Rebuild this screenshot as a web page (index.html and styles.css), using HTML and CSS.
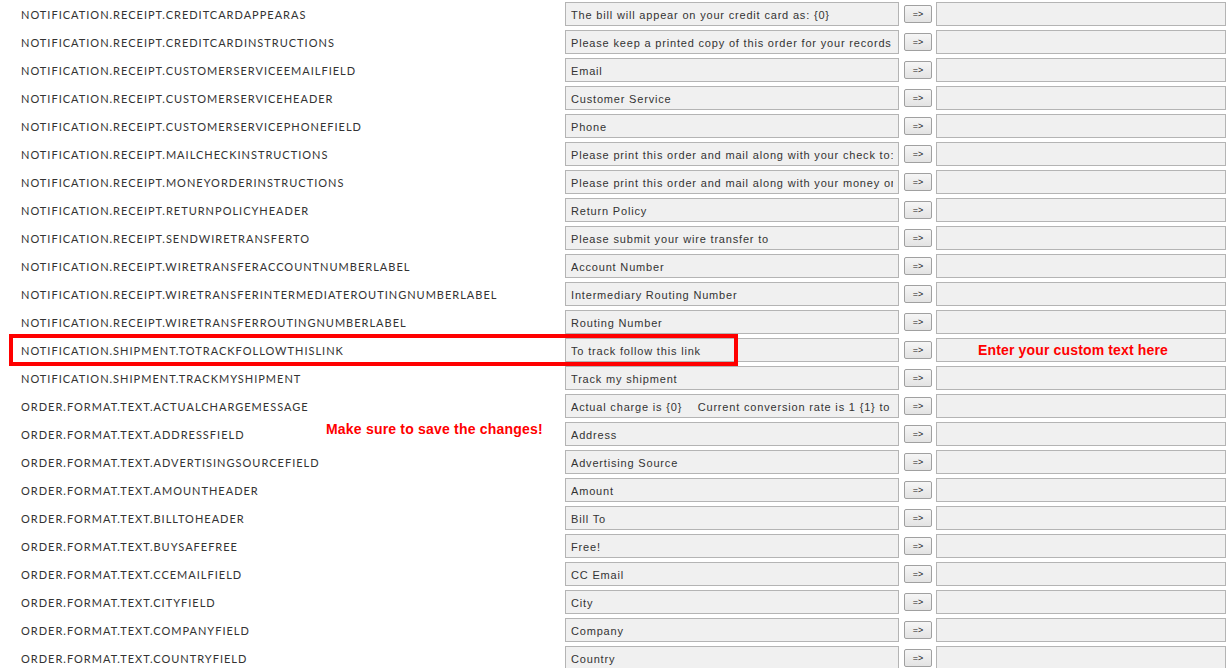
FILE: index.html
```html
<!DOCTYPE html>
<html lang="en">
<head>
    <meta charset="UTF-8">
    <title>Translations</title>
    <link rel="stylesheet" href="styles.css">
</head>
<body>

    <div class="list">
        <div class="row">
            <span class="key">NOTIFICATION.RECEIPT.CREDITCARDAPPEARAS</span>
            <input class="orig" type="text" value="The bill will appear on your credit card as: {0}" readonly>
            <button>=&gt;</button>
            <input class="custom" type="text">
        </div>
        <div class="row">
            <span class="key">NOTIFICATION.RECEIPT.CREDITCARDINSTRUCTIONS</span>
            <input class="orig" type="text" value="Please keep a printed copy of this order for your records" readonly>
            <button>=&gt;</button>
            <input class="custom" type="text">
        </div>
        <div class="row">
            <span class="key">NOTIFICATION.RECEIPT.CUSTOMERSERVICEEMAILFIELD</span>
            <input class="orig" type="text" value="Email" readonly>
            <button>=&gt;</button>
            <input class="custom" type="text">
        </div>
        <div class="row">
            <span class="key">NOTIFICATION.RECEIPT.CUSTOMERSERVICEHEADER</span>
            <input class="orig" type="text" value="Customer Service" readonly>
            <button>=&gt;</button>
            <input class="custom" type="text">
        </div>
        <div class="row">
            <span class="key">NOTIFICATION.RECEIPT.CUSTOMERSERVICEPHONEFIELD</span>
            <input class="orig" type="text" value="Phone" readonly>
            <button>=&gt;</button>
            <input class="custom" type="text">
        </div>
        <div class="row">
            <span class="key">NOTIFICATION.RECEIPT.MAILCHECKINSTRUCTIONS</span>
            <input class="orig" type="text" value="Please print this order and mail along with your check to:" readonly>
            <button>=&gt;</button>
            <input class="custom" type="text">
        </div>
        <div class="row">
            <span class="key">NOTIFICATION.RECEIPT.MONEYORDERINSTRUCTIONS</span>
            <input class="orig" type="text" value="Please print this order and mail along with your money order to:" readonly>
            <button>=&gt;</button>
            <input class="custom" type="text">
        </div>
        <div class="row">
            <span class="key">NOTIFICATION.RECEIPT.RETURNPOLICYHEADER</span>
            <input class="orig" type="text" value="Return Policy" readonly>
            <button>=&gt;</button>
            <input class="custom" type="text">
        </div>
        <div class="row">
            <span class="key">NOTIFICATION.RECEIPT.SENDWIRETRANSFERTO</span>
            <input class="orig" type="text" value="Please submit your wire transfer to" readonly>
            <button>=&gt;</button>
            <input class="custom" type="text">
        </div>
        <div class="row">
            <span class="key">NOTIFICATION.RECEIPT.WIRETRANSFERACCOUNTNUMBERLABEL</span>
            <input class="orig" type="text" value="Account Number" readonly>
            <button>=&gt;</button>
            <input class="custom" type="text">
        </div>
        <div class="row">
            <span class="key">NOTIFICATION.RECEIPT.WIRETRANSFERINTERMEDIATEROUTINGNUMBERLABEL</span>
            <input class="orig" type="text" value="Intermediary Routing Number" readonly>
            <button>=&gt;</button>
            <input class="custom" type="text">
        </div>
        <div class="row">
            <span class="key">NOTIFICATION.RECEIPT.WIRETRANSFERROUTINGNUMBERLABEL</span>
            <input class="orig" type="text" value="Routing Number" readonly>
            <button>=&gt;</button>
            <input class="custom" type="text">
        </div>
        <!-- highlighted row -->
        <div class="row">
            <div class="highlight"></div>
            <span class="key">NOTIFICATION.SHIPMENT.TOTRACKFOLLOWTHISLINK</span>
            <input class="orig" type="text" value="To track follow this link" readonly>
            <button>=&gt;</button>
            <input class="custom" type="text">
            <span class="note note-custom">Enter your custom text here</span>
        </div>
        <div class="row">
            <span class="key">NOTIFICATION.SHIPMENT.TRACKMYSHIPMENT</span>
            <input class="orig" type="text" value="Track my shipment" readonly>
            <button>=&gt;</button>
            <input class="custom" type="text">
        </div>
        <div class="row">
            <span class="key">ORDER.FORMAT.TEXT.ACTUALCHARGEMESSAGE</span>
            <input class="orig" type="text" value="Actual charge is {0}    Current conversion rate is 1 {1} to {2}" readonly>
            <button>=&gt;</button>
            <input class="custom" type="text">
        </div>
        <div class="row">
            <span class="key">ORDER.FORMAT.TEXT.ADDRESSFIELD</span>
            <input class="orig" type="text" value="Address" readonly>
            <button>=&gt;</button>
            <input class="custom" type="text">
            <span class="note note-save">Make sure to save the changes!</span>
        </div>
        <div class="row">
            <span class="key">ORDER.FORMAT.TEXT.ADVERTISINGSOURCEFIELD</span>
            <input class="orig" type="text" value="Advertising Source" readonly>
            <button>=&gt;</button>
            <input class="custom" type="text">
        </div>
        <div class="row">
            <span class="key">ORDER.FORMAT.TEXT.AMOUNTHEADER</span>
            <input class="orig" type="text" value="Amount" readonly>
            <button>=&gt;</button>
            <input class="custom" type="text">
        </div>
        <div class="row">
            <span class="key">ORDER.FORMAT.TEXT.BILLTOHEADER</span>
            <input class="orig" type="text" value="Bill To" readonly>
            <button>=&gt;</button>
            <input class="custom" type="text">
        </div>
        <div class="row">
            <span class="key">ORDER.FORMAT.TEXT.BUYSAFEFREE</span>
            <input class="orig" type="text" value="Free!" readonly>
            <button>=&gt;</button>
            <input class="custom" type="text">
        </div>
        <div class="row">
            <span class="key">ORDER.FORMAT.TEXT.CCEMAILFIELD</span>
            <input class="orig" type="text" value="CC Email" readonly>
            <button>=&gt;</button>
            <input class="custom" type="text">
        </div>
        <div class="row">
            <span class="key">ORDER.FORMAT.TEXT.CITYFIELD</span>
            <input class="orig" type="text" value="City" readonly>
            <button>=&gt;</button>
            <input class="custom" type="text">
        </div>
        <div class="row">
            <span class="key">ORDER.FORMAT.TEXT.COMPANYFIELD</span>
            <input class="orig" type="text" value="Company" readonly>
            <button>=&gt;</button>
            <input class="custom" type="text">
        </div>
        <div class="row">
            <span class="key">ORDER.FORMAT.TEXT.COUNTRYFIELD</span>
            <input class="orig" type="text" value="Country" readonly>
            <button>=&gt;</button>
            <input class="custom" type="text">
        </div>
    </div>

</body>
</html>
```
FILE: styles.css
```css
body {
    margin: 0;
    padding: 0;
    background: #fff;
    font-family: 'Lato', sans-serif;
    overflow: hidden;
}
.list {
    display: flex;
    flex-direction: column;
}
.row {
    position: relative;
    display: flex;
    align-items: center;
    height: 28px;
    padding-left: 21px;
}
.key {
    width: 544px;
    flex-shrink: 0;
    font-size: 11px;
    letter-spacing: 1px;
    color: #333;
}
input {
    box-sizing: border-box;
    height: 24px;
    margin: 0;
    padding: 1px 5px 0;
    background: #f0f0f0;
    border: 1px solid #b4b4b4;
    border-radius: 0;
    font-family: 'Liberation Sans', Arial, sans-serif;
    font-size: 11px;
    letter-spacing: 0.82px;
    color: #333;
    outline: none;
}
.orig {
    width: 334px;
    flex-shrink: 0;
}
.custom {
    width: 290px;
    flex-shrink: 0;
}
button {
    box-sizing: border-box;
    width: 28px;
    height: 18px;
    margin: 0 4px 0 5px;
    padding: 0;
    flex-shrink: 0;
    background: linear-gradient(#f6f6f6, #e3e3e3);
    border: 1px solid #a0a0a0;
    border-radius: 2px;
    font-family: 'Liberation Sans', Arial, sans-serif;
    font-size: 9px;
    color: #222;
}
.highlight {
    position: absolute;
    left: 9px;
    top: -2px;
    width: 721px;
    height: 24px;
    border: 4px solid #ff0000;
}
.note {
    position: absolute;
    font-family: 'Liberation Sans', Arial, sans-serif;
    font-size: 14px;
    font-weight: bold;
    color: #ff0000;
    line-height: 16px;
}
.note-custom {
    left: 978px;
    top: 6px;
    letter-spacing: 0.15px;
}
.note-save {
    left: 326px;
    top: 1px;
    letter-spacing: 0.2px;
}
```
